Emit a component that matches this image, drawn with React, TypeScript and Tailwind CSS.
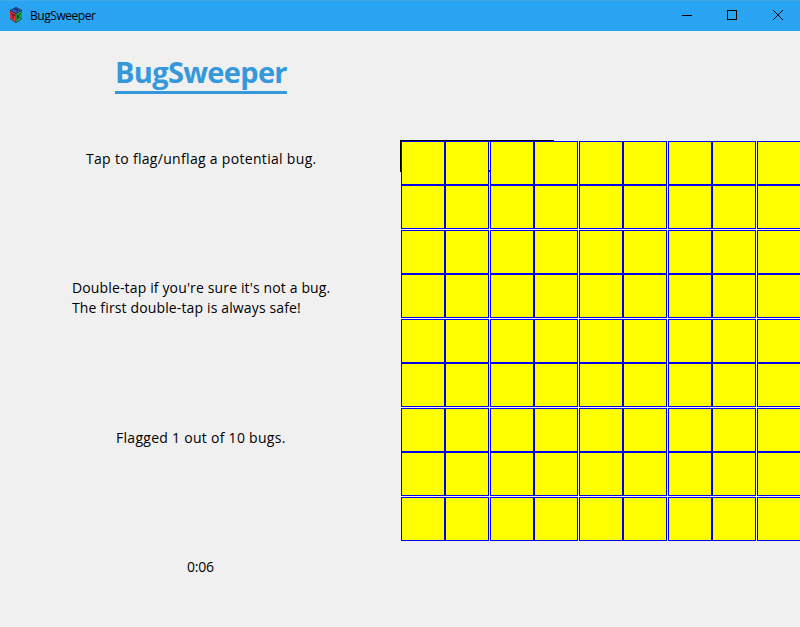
const rows = Array.from({ length: 9 }, (_, i) => i);

function CubeIcon() {
  return (
    <svg width="16" height="18" viewBox="0 0 16 18">
      <path d="M8 1 L14 4 V13 L8 17 L2 13 V4 Z" fill="#1a2430" />
      <path d="M8 1.5 L13.4 4.2 L8 7.2 L2.6 4.2 Z" fill="#2a62d0" />
      <path d="M2.2 5 L7.7 8 V16.2 L2.2 12.6 Z" fill="#f5333a" />
      <path d="M8.3 8 L13.8 5 V12.6 L8.3 16.2 Z" fill="#1fb552" />
      <path d="M6 3.8 L8 2.7 L10.2 4 L8.3 5.3" fill="none" stroke="#0b1430" strokeWidth="0.9" />
      <path d="M3 7.6 L7 9.6 M5 8.8 V13" fill="none" stroke="#28090c" strokeWidth="0.9" />
      <path d="M9.7 8.8 V13.8 M12.6 7.3 L10 10.6 L12.7 11.8" fill="none" stroke="#062010" strokeWidth="0.9" />
    </svg>
  );
}

function TitleBar() {
  return (
    <header className="flex h-[31px] items-start border-t border-[#3eaaee] bg-[#28a4f2]">
      <div className="ml-2 mt-[5px]"><CubeIcon /></div>
      <span className="ml-1.5 mt-[5px] whitespace-nowrap text-[12px] leading-[20px] tracking-[-0.45px]">BugSweeper</span>
      <svg className="ml-auto" width="130" height="30" fill="none" stroke="#000" shapeRendering="crispEdges">
        <path d="M12 14.5 H22" />
        <rect x="57.5" y="9.5" width="9" height="9" />
        <path d="M103 9 L113 19 M113 9 L103 19" shapeRendering="auto" />
      </svg>
    </header>
  );
}

function Cell() {
  return <div className="h-[44px] w-[44px] shrink-0 border border-[#0000f0] bg-[#ffff00]" />;
}

function Board() {
  return (
    <div className="relative h-[401px] w-[400px] overflow-hidden pl-px pt-px">
      <div className="absolute left-0 top-0 h-[32px] w-[154px] border-2 border-black bg-white" />
      <div className="relative">
        {rows.map((r) => (
          <div key={r} className={r % 2 === 1 ? "mb-px flex" : "flex"}>
            {rows.map((c) => (
              <div key={c} className={c % 2 === 1 ? "mr-px shrink-0" : "shrink-0"}>
                <Cell />
              </div>
            ))}
          </div>
        ))}
      </div>
    </div>
  );
}

export default function App() {
  return (
    <div className="h-[627px] w-[800px] overflow-hidden bg-[#f0f0f0] font-['Open_Sans','Noto_Sans',sans-serif] text-black">
      <TitleBar />
      <main className="flex">
        <section className="h-[596px] w-[400px] whitespace-nowrap text-[14px] leading-[20px]">
          <h1 className="ml-[115px] mt-[22px] h-[41px] w-[172px] border-b-[3px] border-[#3498db] text-[29px] font-bold leading-[37px] tracking-[-0.68px] text-[#3498db]">BugSweeper</h1>
          <p className="ml-[86px] mt-[55px] tracking-[0.31px]">Tap to flag/unflag a potential bug.</p>
          <p className="ml-[72px] mt-[109px] tracking-[0.14px]">Double-tap if you're sure it's not a bug.<br />The first double-tap is always safe!</p>
          <p className="ml-[116px] mt-[110px] tracking-[0.28px]">Flagged 1 out of 10 bugs.</p>
          <p className="ml-[187px] mt-[109px] tracking-[-0.2px]">0:06</p>
        </section>
        <section className="pt-[109px]"><Board /></section>
      </main>
    </div>
  );
}
